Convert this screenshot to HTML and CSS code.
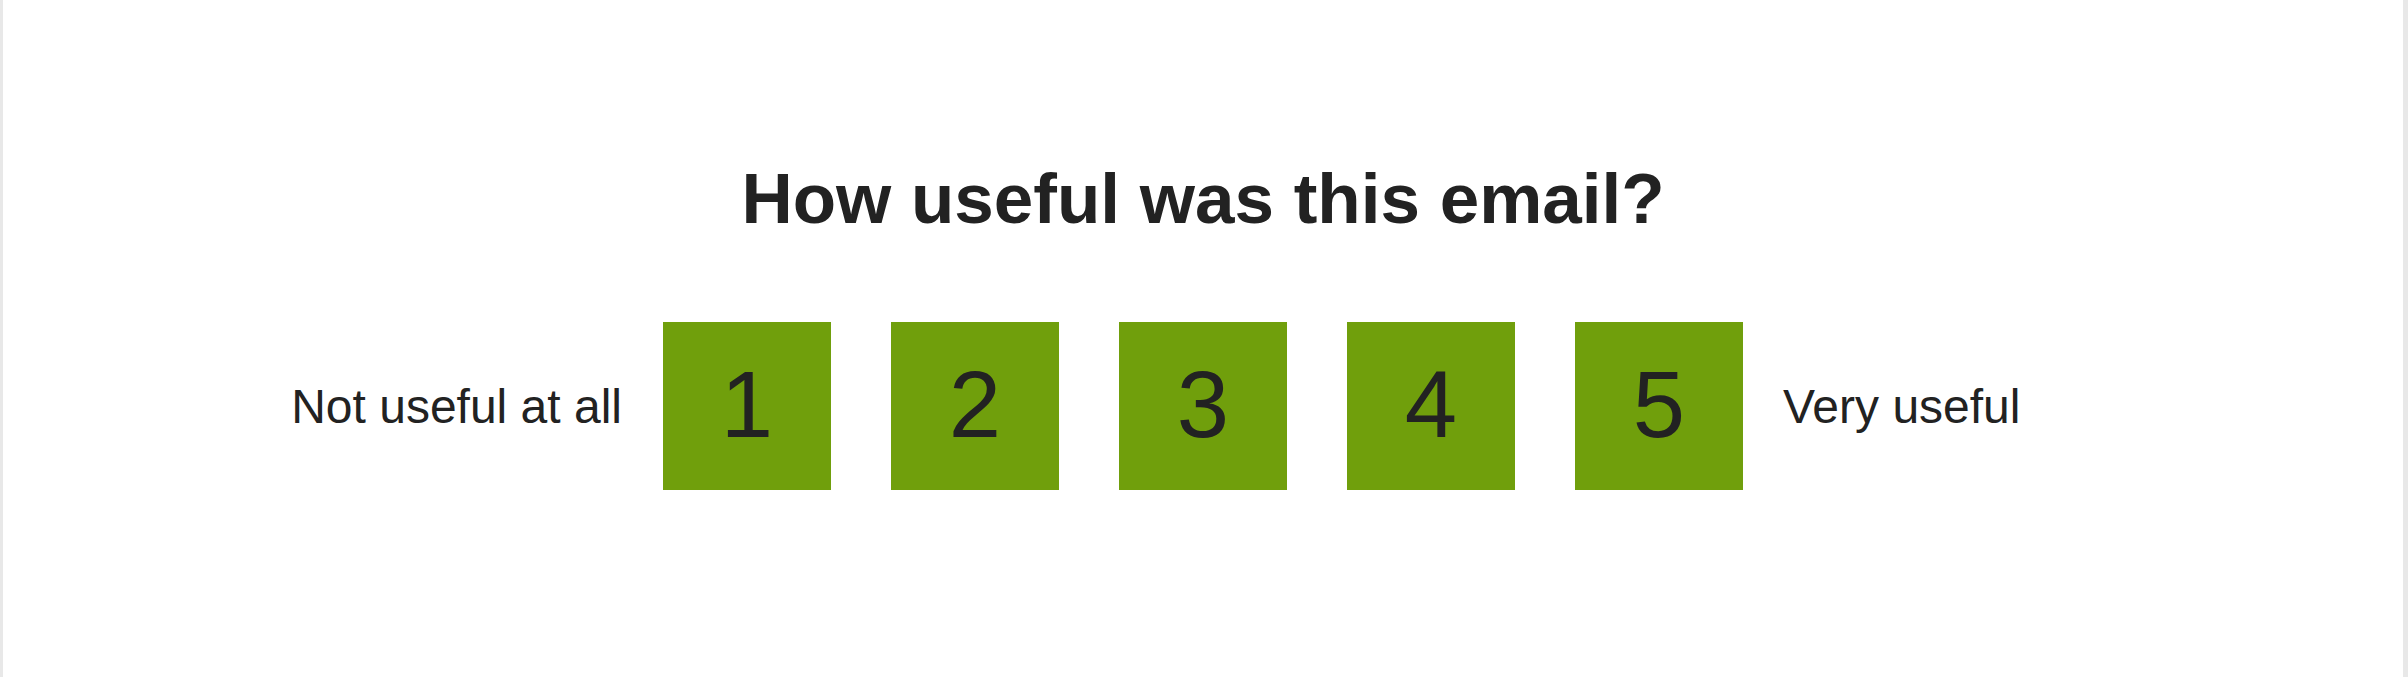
FILE: index.html
```html
<!DOCTYPE html>
<html lang="en">
<head>
  <meta charset="UTF-8" />
  <meta name="viewport" content="width=device-width, initial-scale=1.0"/>
  <title>Feedback</title>
  <link rel="stylesheet" href="styles.css">
</head>
<body>

  <!-- FEEDBACK -->
  <main class="frame">
    <section class="feedback">
      <h1>How useful was this email?</h1>
      <div class="rating">
        <span class="rating-label left">Not useful at all</span>
        <div class="rating-scale">
          <a href="#" class="rating-btn">1</a>
          <a href="#" class="rating-btn">2</a>
          <a href="#" class="rating-btn">3</a>
          <a href="#" class="rating-btn">4</a>
          <a href="#" class="rating-btn">5</a>
        </div>
        <span class="rating-label right">Very useful</span>
      </div>
    </section>
  </main>

</body>
</html>
```

FILE: styles.css
```css
/* ===== Reset ===== */
*, *::before, *::after { margin:0; padding:0; box-sizing:border-box; }
body {
  font-family:'Liberation Sans', Arial, Helvetica, sans-serif;
  background:#fff; color:#222;
}
a { text-decoration:none; color:inherit; }

/* ===== Variables ===== */
:root {
  --green:#709f0c;
  --text:#222;
  --edge:#e8e8e8;
}

/* ===== Frame ===== */
.frame {
  min-height:100vh;
  border-left:3px solid var(--edge);
  border-right:5px solid var(--edge);
  background:#fff;
}

/* ===== Feedback ===== */
.feedback { padding-top:158px; }
.feedback h1 {
  text-align:center; font-size:71px; font-weight:700; color:var(--text);
  margin-bottom:83px;
}
.rating {
  display:grid; grid-template-columns:1fr auto 1fr; align-items:center;
}
.rating-label { font-size:48px; color:var(--text); }
.rating-label.left { justify-self:end; margin-right:41px; }
.rating-label.right { justify-self:start; margin-left:40px; }
.rating-scale { display:flex; gap:60px; }
.rating-btn {
  width:168px; height:168px; background:var(--green);
  display:flex; align-items:center; justify-content:center;
  font-size:94px; color:var(--text); padding-bottom:2px;
}
```
